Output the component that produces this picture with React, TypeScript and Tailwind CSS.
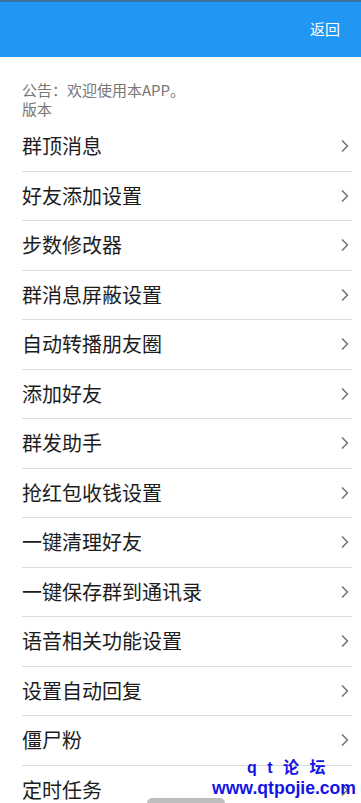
import { ChevronRight } from "lucide-react";

const items = [
  "群顶消息",
  "好友添加设置",
  "步数修改器",
  "群消息屏蔽设置",
  "自动转播朋友圈",
  "添加好友",
  "群发助手",
  "抢红包收钱设置",
  "一键清理好友",
  "一键保存群到通讯录",
  "语音相关功能设置",
  "设置自动回复",
  "僵尸粉",
  "定时任务",
];

export default function App() {
  return (
    <div
      className="relative h-[803px] w-[361px] overflow-hidden bg-white"
      style={{ fontFamily: '"Noto Sans CJK SC", "Noto Sans", sans-serif' }}
    >
      <header className="flex h-[57px] items-center justify-end border-t-2 border-[#3d6f99] bg-[#2196f3] pb-[2px] pr-[21px]">
        <span className="text-[15px] leading-none text-white">返回</span>
      </header>

      <div className="px-[22px] pt-[23px] text-[15px] leading-[19px] text-[#777]">
        <div>公告：欢迎使用本APP。</div>
        <div>版本</div>
      </div>

      <ul className="ml-[22px] mr-[9px] mt-[4px]">
        {items.map((t) => (
          <li
            key={t}
            className="flex h-[49.5px] items-center justify-between border-b border-[#dcdcdc]"
          >
            <span className="text-[20px] leading-none text-[#1c1c1c]">{t}</span>
            <ChevronRight size={20} strokeWidth={2} className="mr-[-3px] text-[#777]" />
          </li>
        ))}
      </ul>

      {/* forum watermark */}
      <div
        className="absolute left-[212px] top-[757px] flex flex-col font-bold text-[#1414e6]"
        style={{ fontFamily: '"Liberation Sans", "Noto Sans CJK SC", sans-serif' }}
      >
        <span className="ml-[35px] text-[16px] leading-[21px] tracking-[3px]">q t 论 坛</span>
        <span className="text-[17.6px] leading-[20px]">www.qtpojie.com</span>
      </div>

      <div className="absolute bottom-0 left-[147px] h-[5px] w-[78px] rounded-t-full bg-[#bdbdbd]" />
    </div>
  );
}
